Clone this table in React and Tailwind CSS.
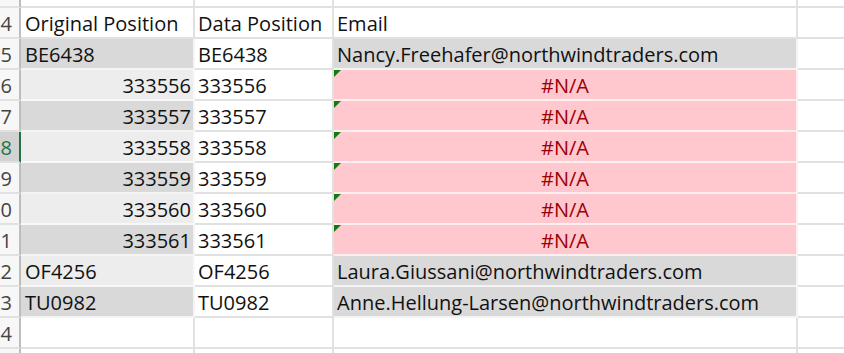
import React from 'react';

// Spreadsheet excerpt: rows 4..14, columns A..D
const rows = [
  { n: 4, a: 'Original Position', b: 'Data Position', c: 'Email', aFill: '', cFill: '' },
  { n: 5, a: 'BE6438', b: 'BE6438', c: 'Nancy.Freehafer@northwindtraders.com', aFill: 'dark', cFill: 'gray' },
  { n: 6, a: '333556', b: '333556', c: '#N/A', aFill: 'light', cFill: 'error', num: true },
  { n: 7, a: '333557', b: '333557', c: '#N/A', aFill: 'dark', cFill: 'error', num: true },
  { n: 8, a: '333558', b: '333558', c: '#N/A', aFill: 'light', cFill: 'error', num: true, active: true },
  { n: 9, a: '333559', b: '333559', c: '#N/A', aFill: 'dark', cFill: 'error', num: true },
  { n: 10, a: '333560', b: '333560', c: '#N/A', aFill: 'light', cFill: 'error', num: true },
  { n: 11, a: '333561', b: '333561', c: '#N/A', aFill: 'dark', cFill: 'error', num: true },
  { n: 12, a: 'OF4256', b: 'OF4256', c: 'Laura.Giussani@northwindtraders.com', aFill: 'light', cFill: 'gray' },
  { n: 13, a: 'TU0982', b: 'TU0982', c: 'Anne.Hellung-Larsen@northwindtraders.com', aFill: 'dark', cFill: 'gray' },
  { n: 14, a: '', b: '', c: '', aFill: '', cFill: '' },
];

const aBg = {
  '': 'bg-white border-[#e1e1e1]',
  dark: 'bg-[#d9d9d9] border-[#f4f4f4]',
  light: 'bg-[#ededed] border-[#f8f8f8]',
};

const cBg = {
  '': 'bg-white border-[#e1e1e1]',
  gray: 'bg-[#d9d9d9] border-[#f4f4f4]',
  error: 'bg-[#ffc7ce] border-[#fdeef0] text-[#9c0006]',
};

function RowHeader({ n, active }) {
  return (
    <div
      className={`h-[31px] w-[21px] shrink-0 overflow-hidden flex items-end justify-end pr-[7px] pb-[3px] border-b-2 border-b-[#e1e1e1] border-r-2 ${
        active ? 'bg-[#d2d2d2] text-[#217346] border-r-[#217346]' : 'bg-[#f7f7f7] text-[#444444] border-r-[#bdbdbd]'
      }`}
    >
      <span className="whitespace-nowrap">{n}</span>
    </div>
  );
}

function Row({ r }) {
  return (
    <div className="flex">
      <RowHeader n={r.n} active={r.active} />
      <div
        className={`h-[31px] w-[174px] shrink-0 flex items-end pb-[3px] border-b-2 border-r-2 ${aBg[r.aFill]} ${
          r.num ? 'justify-end pr-[2px]' : 'pl-[4px]'
        }`}
      >
        <span className="whitespace-nowrap">{r.a}</span>
      </div>
      <div className="h-[31px] w-[139px] shrink-0 flex items-end pb-[3px] pl-[3px] border-b-2 border-r-2 bg-white border-[#e1e1e1]">
        <span className="whitespace-nowrap">{r.b}</span>
      </div>
      <div
        className={`relative h-[31px] w-[464px] shrink-0 flex items-end pb-[3px] border-b-2 border-r-2 ${cBg[r.cFill]} ${
          r.cFill === 'error' ? 'justify-center' : 'pl-[3px]'
        }`}
      >
        {r.cFill === 'error' && (
          <svg className="absolute left-0 top-0" width="7" height="7" viewBox="0 0 7 7">
            <polygon points="0,0 7,0 0,7" fill="#107c10" />
          </svg>
        )}
        <span className="whitespace-nowrap">{r.c}</span>
      </div>
      <div className="h-[31px] flex-1 border-b-2 border-[#e1e1e1] bg-white" />
    </div>
  );
}

export default function App() {
  return (
    <div
      className="w-[844px] h-[353px] overflow-hidden bg-white text-[#111111] text-[20px] leading-none"
      style={{ fontFamily: '"Open Sans", Lato, sans-serif' }}
    >
      {/* partial row above row 4 */}
      <div className="flex">
        <div className="h-[8px] w-[21px] shrink-0 border-b-2 border-b-[#e1e1e1] border-r-2 border-r-[#bdbdbd] bg-[#f7f7f7]" />
        <div className="h-[8px] w-[174px] shrink-0 border-b-2 border-r-2 border-[#e1e1e1]" />
        <div className="h-[8px] w-[139px] shrink-0 border-b-2 border-r-2 border-[#e1e1e1]" />
        <div className="h-[8px] w-[464px] shrink-0 border-b-2 border-r-2 border-[#e1e1e1]" />
        <div className="h-[8px] flex-1 border-b-2 border-[#e1e1e1]" />
      </div>
      {rows.map((r) => (
        <Row key={r.n} r={r} />
      ))}
      {/* partial row 15 */}
      <div className="flex">
        <div className="h-[8px] w-[21px] shrink-0 border-r-2 border-r-[#bdbdbd] bg-[#f7f7f7]" />
        <div className="h-[8px] w-[174px] shrink-0 border-r-2 border-[#e1e1e1]" />
        <div className="h-[8px] w-[139px] shrink-0 border-r-2 border-[#e1e1e1]" />
        <div className="h-[8px] w-[464px] shrink-0 border-r-2 border-[#e1e1e1]" />
        <div className="h-[8px] flex-1" />
      </div>
    </div>
  );
}
